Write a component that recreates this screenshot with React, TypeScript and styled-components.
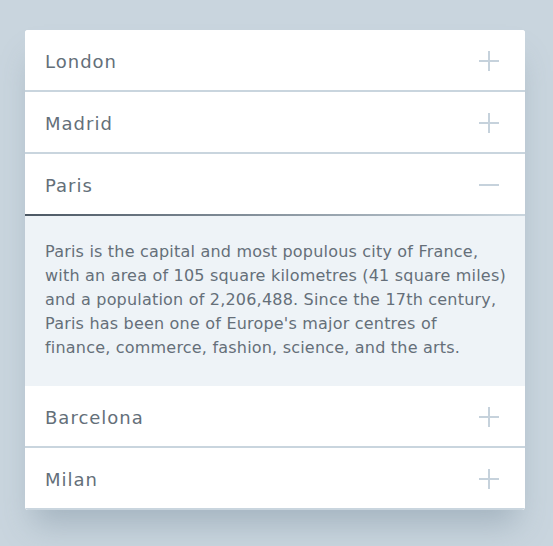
import React, { useState } from "react";
import styled, { createGlobalStyle } from "styled-components";

const Global = createGlobalStyle`
  html, body { margin: 0; padding: 0; }
  body {
    background: #c9d5de;
    font-family: "DejaVu Sans", "Noto Sans", sans-serif;
    width: 553px;
    height: 546px;
    overflow: hidden;
  }
`;

const Page = styled.div`
  padding: 30px 0 0 25px;
`;

const Card = styled.div`
  width: 500px;
  background: #fff;
  border-radius: 3px;
  overflow: hidden;
  box-shadow: 0 22px 30px -8px rgba(120, 140, 155, 0.45);
`;

const Item = styled.div``;

const Header = styled.button<{ $open: boolean }>`
  display: flex;
  align-items: center;
  justify-content: space-between;
  width: 100%;
  height: 62px;
  padding: 2px 26px 0 20px;
  box-sizing: border-box;
  border: 0;
  border-bottom: 2px solid transparent;
  border-image: ${(p) =>
    p.$open
      ? "linear-gradient(to right, #4b5763, #c9d5de) 1"
      : "linear-gradient(#c9d5de, #c9d5de) 1"};
  background: #fff;
  cursor: pointer;
  font-family: inherit;
  text-align: left;
`;

const Title = styled.span`
  font-size: 18px;
  font-weight: 400;
  letter-spacing: 1px;
  color: #646f79;
`;

const Icon = styled.svg`
  width: 20px;
  height: 20px;
  flex: none;
`;

const Panel = styled.div`
  background: #eef3f7;
  padding: 24px 12px 26px 20px;
  font-size: 16px;
  line-height: 24px;
  color: #656f79;
  letter-spacing: 0.2px;
`;

const Line = styled.span`
  display: block;
  white-space: nowrap;
`;

const items: { title: string; lines: string[] }[] = [
  { title: "London", lines: [] },
  { title: "Madrid", lines: [] },
  {
    title: "Paris",
    lines: [
      "Paris is the capital and most populous city of France,",
      "with an area of 105 square kilometres (41 square miles)",
      "and a population of 2,206,488. Since the 17th century,",
      "Paris has been one of Europe's major centres of",
      "finance, commerce, fashion, science, and the arts.",
    ],
  },
  { title: "Barcelona", lines: [] },
  { title: "Milan", lines: [] },
];

export default function App() {
  const [open, setOpen] = useState(2);
  return (
    <>
      <Global />
      <Page>
        <Card>
          {items.map((it, i) => {
            const isOpen = open === i;
            return (
              <Item key={it.title}>
                <Header $open={isOpen} onClick={() => setOpen(isOpen ? -1 : i)}>
                  <Title>{it.title}</Title>
                  <Icon viewBox="0 0 20 20">
                    <path d="M0 10H20" stroke="#c6d2dc" strokeWidth="2" />
                    {!isOpen && <path d="M10 0V20" stroke="#c6d2dc" strokeWidth="2" />}
                  </Icon>
                </Header>
                {isOpen && (
                  <Panel>
                    {it.lines.map((l) => (
                      <Line key={l}>{l}</Line>
                    ))}
                  </Panel>
                )}
              </Item>
            );
          })}
        </Card>
      </Page>
    </>
  );
}
